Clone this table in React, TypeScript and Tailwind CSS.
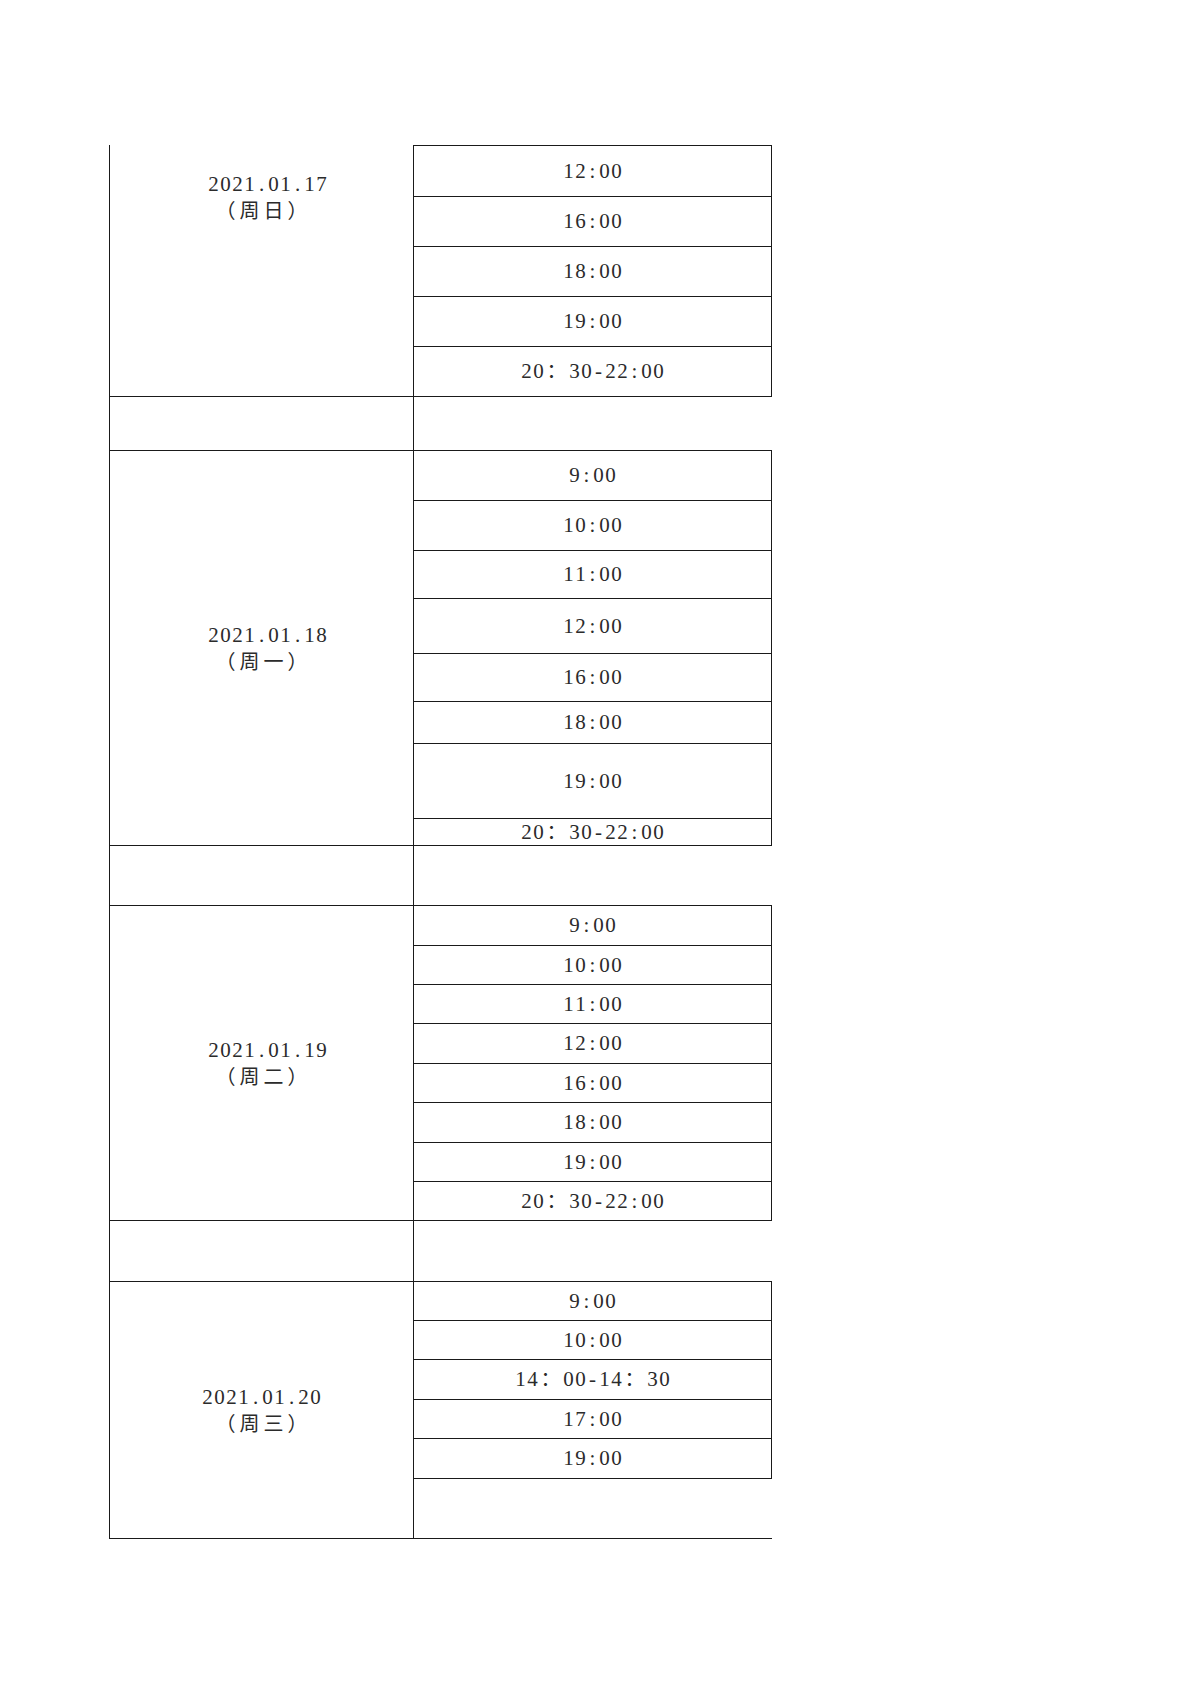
import React from "react";

type Row = [number, string];
type Section = {
  date: string;
  day: string;
  rows: Row[];
  first?: boolean;
  gap?: number;
  trailing?: number;
};

const sections: Section[] = [
  {
    date: " 2021.01.17",
    day: "（周日）",
    first: true,
    rows: [
      [52, "12:00"],
      [50, "16:00"],
      [50, "18:00"],
      [50, "19:00"],
      [50, "20：30-22:00"],
    ],
    gap: 54,
  },
  {
    date: " 2021.01.18",
    day: "（周一）",
    rows: [
      [50, "9:00"],
      [50, "10:00"],
      [48, "11:00"],
      [55, "12:00"],
      [48, "16:00"],
      [42, "18:00"],
      [75, "19:00"],
      [27, "20：30-22:00"],
    ],
    gap: 60,
  },
  {
    date: " 2021.01.19",
    day: "（周二）",
    rows: [
      [40, "9:00"],
      [39, "10:00"],
      [39, "11:00"],
      [40, "12:00"],
      [39, "16:00"],
      [40, "18:00"],
      [39, "19:00"],
      [39, "20：30-22:00"],
    ],
    gap: 61,
  },
  {
    date: "2021.01.20",
    day: "（周三）",
    rows: [
      [39, "9:00"],
      [39, "10:00"],
      [40, "14：00-14：30"],
      [39, "17:00"],
      [40, "19:00"],
    ],
    trailing: 60,
  },
];

function isWide(c: string) {
  return c.charCodeAt(0) > 0x2e80;
}

function Line({ text }: { text: string }) {
  return (
    <div className="flex justify-center items-center whitespace-nowrap leading-[25px] h-[25px]">
      {Array.from(text).map((c, i) =>
        isWide(c) ? (
          <span key={i} className="inline-block w-[24px] text-center text-[20px]">
            {c}
          </span>
        ) : (
          <span key={i} className="inline-block w-[12px] text-center">
            {c === " " ? "\u00a0" : c}
          </span>
        )
      )}
    </div>
  );
}

export default function App() {
  return (
    <div className="bg-white min-h-[1698px] w-[1200px] pt-[145px] font-['Liberation_Serif','Noto_Sans_CJK_SC',serif] text-[21px] text-[#2b2b2b]">
      <div className="ml-[109px] w-[663px] border-l border-[#1a1a1a]">
        {sections.map((s, si) => {
          const total =
            s.rows.reduce((a, r) => a + r[0], 0) + (s.trailing ?? 0);
          return (
            <React.Fragment key={si}>
              <div className="flex">
                <div
                  className={
                    "w-[304px] shrink-0 border-r border-b border-[#1a1a1a] flex flex-col gap-[2px] " +
                    (s.first ? "justify-start pt-[27px]" : "justify-center pt-[2px]")
                  }
                  style={{ height: total }}
                >
                  <Line text={s.date} />
                  <Line text={s.day} />
                </div>
                <div className="w-[358px] shrink-0 flex flex-col">
                  {s.rows.map((r, ri) => (
                    <div
                      key={ri}
                      className={
                        "border-r border-b border-[#1a1a1a] flex items-center justify-center " +
                        (s.first && ri === 0 ? "border-t" : "")
                      }
                      style={{ height: r[0] }}
                    >
                      <Line text={r[1]} />
                    </div>
                  ))}
                  {s.trailing ? (
                    <div
                      className="border-b border-[#1a1a1a]"
                      style={{ height: s.trailing }}
                    />
                  ) : null}
                </div>
              </div>
              {s.gap ? (
                <div className="flex" style={{ height: s.gap }}>
                  <div className="w-[304px] shrink-0 border-r border-b border-[#1a1a1a]" />
                  <div className="w-[358px] shrink-0 border-b border-[#1a1a1a]" />
                </div>
              ) : null}
            </React.Fragment>
          );
        })}
      </div>
    </div>
  );
}
